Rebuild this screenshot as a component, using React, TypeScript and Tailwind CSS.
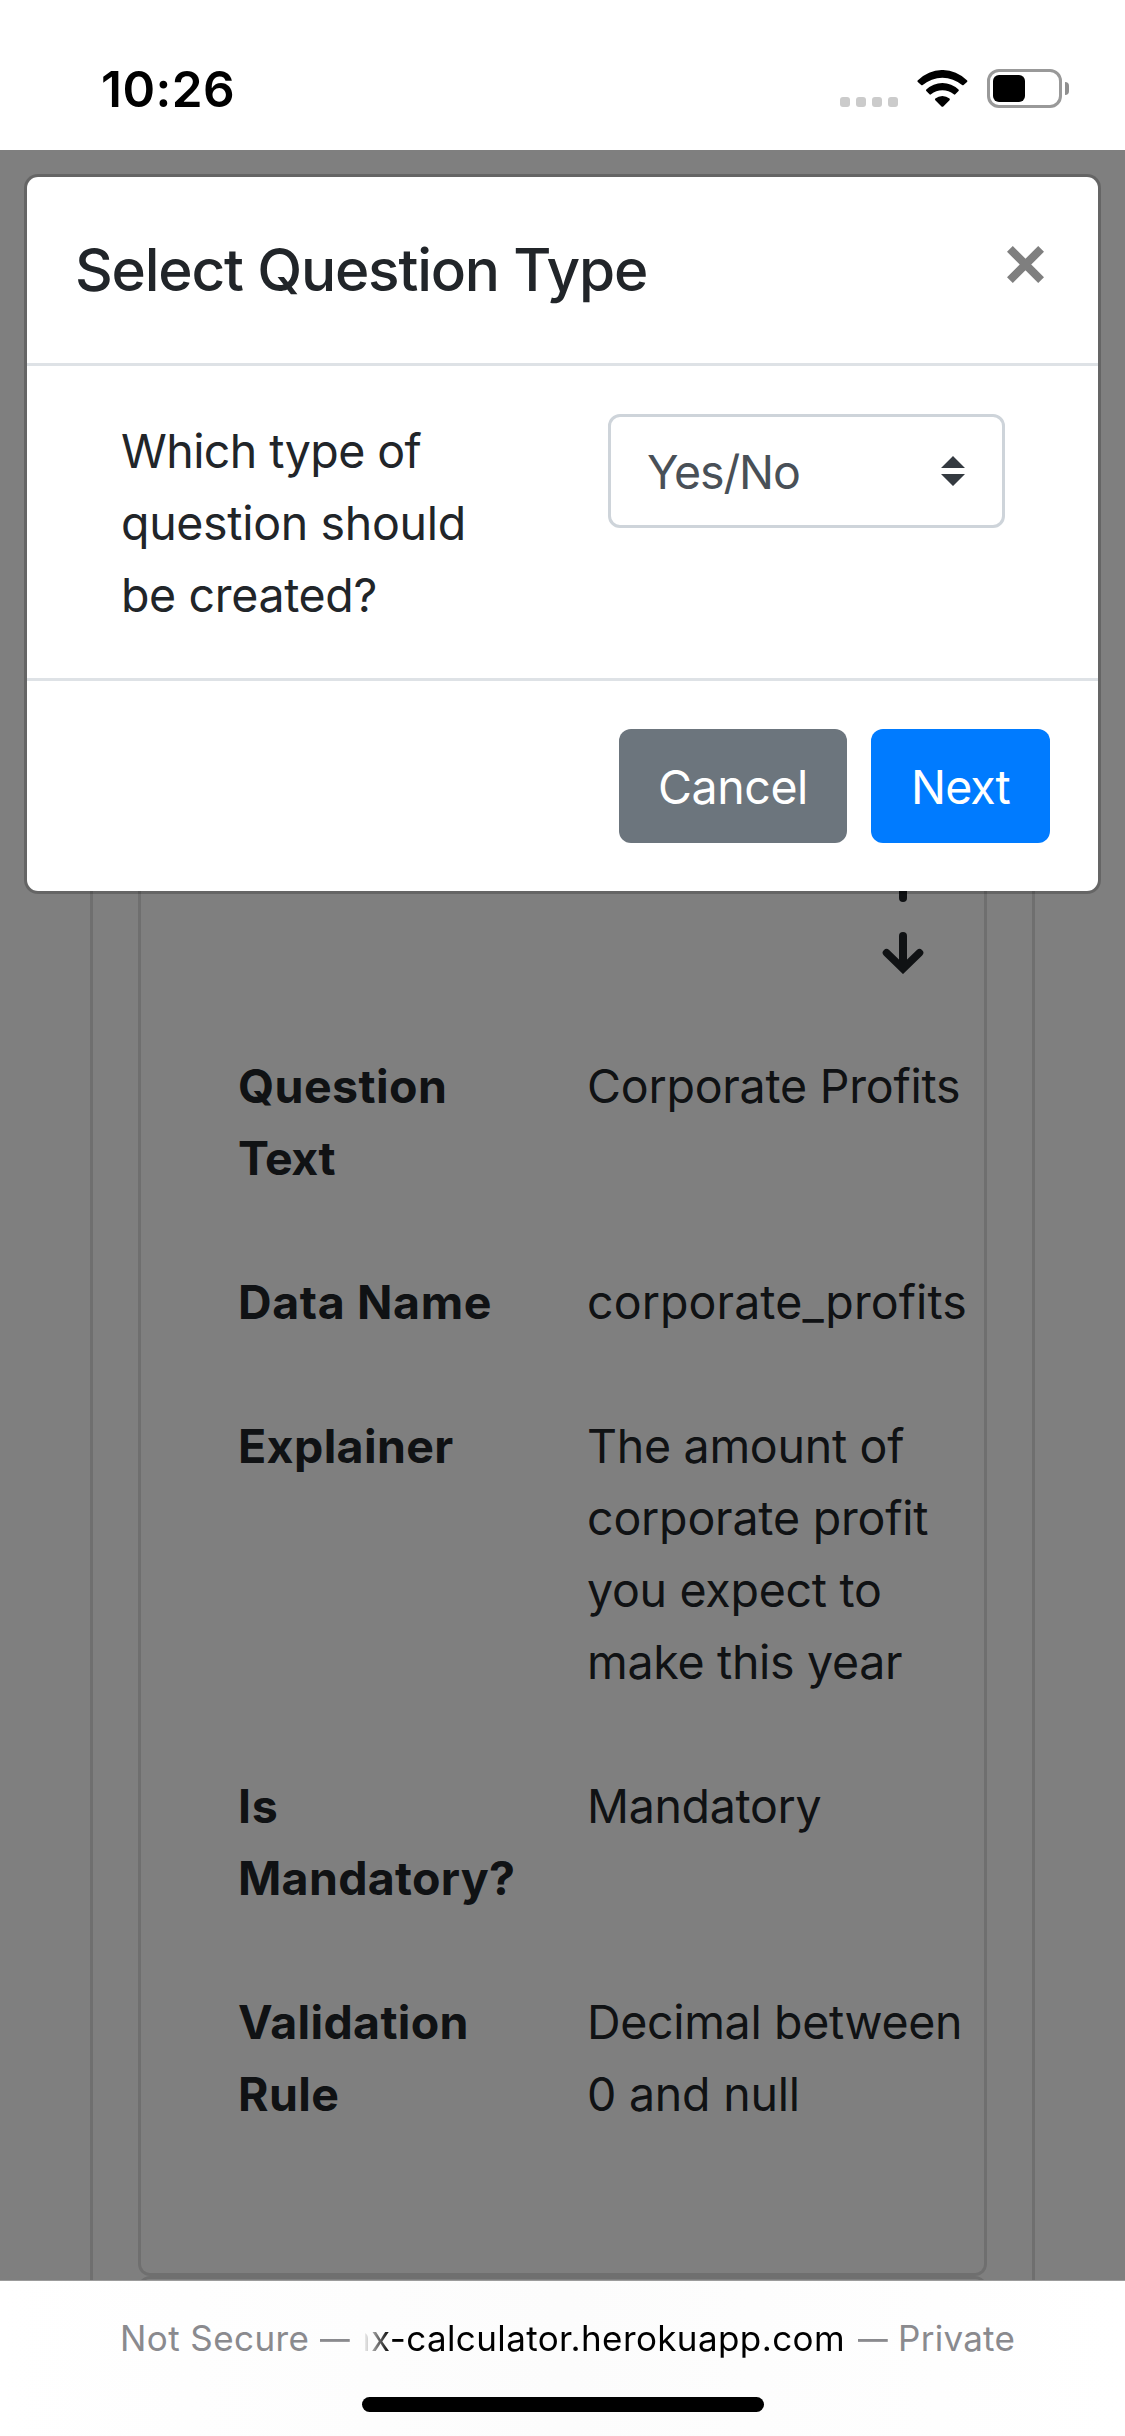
import React from "react";

type Line = { text: string; track: string };

const rows: { label: Line[]; value: Line[] }[] = [
  {
    label: [
      { text: "Question", track: "tracking-[0.0095em]" },
      { text: "Text", track: "tracking-[-0.010em]" },
    ],
    value: [{ text: "Corporate Profits", track: "tracking-[-0.0048em]" }],
  },
  {
    label: [{ text: "Data Name", track: "tracking-[0.0135em]" }],
    value: [{ text: "corporate_profits", track: "tracking-[0.0022em]" }],
  },
  {
    label: [{ text: "Explainer", track: "tracking-[0.008em]" }],
    value: [
      { text: "The amount of", track: "tracking-[-0.006em]" },
      { text: "corporate profit", track: "tracking-[-0.004em]" },
      { text: "you expect to", track: "tracking-[-0.006em]" },
      { text: "make this year", track: "tracking-[-0.0066em]" },
    ],
  },
  {
    label: [
      { text: "Is", track: "tracking-[0.015em]" },
      { text: "Mandatory?", track: "tracking-[0.0065em]" },
    ],
    value: [{ text: "Mandatory", track: "tracking-[-0.007em]" }],
  },
  {
    label: [
      { text: "Validation", track: "tracking-[0.007em]" },
      { text: "Rule", track: "tracking-[0.008em]" },
    ],
    value: [
      { text: "Decimal between", track: "tracking-[-0.007em]" },
      { text: "0 and null", track: "tracking-[-0.005em]" },
    ],
  },
];

function Lines({ lines }: { lines: Line[] }) {
  return (
    <>
      {lines.map((l) => (
        <span key={l.text} className={`block whitespace-nowrap ${l.track}`}>
          {l.text}
        </span>
      ))}
    </>
  );
}

function StatusBar() {
  return (
    <header className="flex h-[150px] shrink-0 justify-between bg-white pl-[101px] pr-[56px]">
      <span className="mt-[59px] text-[49.5px] leading-[60px] font-semibold tracking-[0.009em] text-black">
        10:26
      </span>
      <div className="mt-[69px] flex h-[39px]">
        <div className="mt-[28px] flex gap-[6px]">
          {[0, 1, 2, 3].map((i) => (
            <i key={i} className="size-[10px] rounded-[3px] bg-[#cbcbcb]" />
          ))}
        </div>
        <svg className="mt-px ml-[19px] h-[38px] w-[51px]" viewBox="0 0 51 38" fill="#000">
          <path d="M0.9 10.2A34.5 34.5 0 0 1 49.9 10.2Q50.9 11 50 11.9L46.6 15Q45.9 15.6 45.1 15A30.5 30.5 0 0 0 5.7 15Q4.9 15.6 4.2 15L0.8 11.9Q-0.1 11 0.9 10.2Z" />
          <path d="M9.3 19.4A23.4 23.4 0 0 1 41.5 19.4Q42.3 20.2 41.5 21L38.3 24.3Q37.6 25 36.8 24.3A18.4 18.4 0 0 0 14 24.3Q13.2 25 12.5 24.3L9.3 21Q8.5 20.2 9.3 19.4Z" />
          <path d="M18.3 28.6A11.2 11.2 0 0 1 32.5 28.6Q33.3 29.4 32.5 30.2L26.3 36.4Q25.4 37.3 24.5 36.4L18.3 30.2Q17.5 29.4 18.3 28.6Z" />
        </svg>
        <div className="ml-[19px] h-[39px] w-[75px] rounded-[12px] border-[3px] border-[#999] p-[3px]">
          <div className="h-[27px] w-[32px] rounded-[6px] bg-black" />
        </div>
        <div className="mt-[13px] ml-[3px] h-[13px] w-[4px] rounded-r-full bg-[#8f8f8f]" />
      </div>
    </header>
  );
}

function MoveIcon({ up = false }: { up?: boolean }) {
  return (
    <svg
      className={up ? "h-[42px] w-[42px] rotate-180" : "h-[42px] w-[42px]"}
      viewBox="0 0 42 42"
      fill="none"
      stroke="#212529"
      strokeWidth="8"
      strokeLinecap="round"
    >
      <path d="M21 4V34" />
      <path d="M4.5 20.8L21 36.8L37.5 20.8" strokeWidth="7.6" />
    </svg>
  );
}

function Page() {
  return (
    <div className="mx-[90px] mt-[60px] border-x-[3px] border-black/[.125] px-[45px] text-[46.5px] leading-[72px] text-[#212529]">
      <section className="h-[2066px] rounded-b-[12px] border-[3px] border-t-0 border-black/[.125] pt-[650px]">
        <div className="ml-[741px] flex flex-col gap-[30px]">
          <MoveIcon up />
          <MoveIcon />
        </div>
        <dl className="mt-[76px] flex flex-col gap-[72px] pl-[97px]">
          {rows.map((r) => (
            <div key={r.label[0].text} className="flex">
              <dt className="w-[349px] shrink-0 font-bold">
                <Lines lines={r.label} />
              </dt>
              <dd>
                <Lines lines={r.value} />
              </dd>
            </div>
          ))}
        </dl>
      </section>
      <section className="h-[200px] rounded-t-[12px] border-[3px] border-black/[.125]" />
    </div>
  );
}

function Modal() {
  return (
    <div
      role="dialog"
      className="absolute top-[24px] left-[24px] flex h-[720px] w-[1077px] flex-col rounded-[14px] border-[3px] border-black/20 bg-white bg-clip-padding text-[46.5px] leading-[72px] text-[#212529]"
    >
      <div className="flex h-[189px] justify-between border-b-[3px] border-[#dee2e6] pt-[48px] pr-[54px] pl-[48px]">
        <h5 className="text-[58.5px] leading-[90px] font-medium tracking-[-0.0204em]">
          Select Question Type
        </h5>
        <svg
          className="mt-[21px] size-[37px]"
          viewBox="0 0 37 37"
          stroke="#7f7f7f"
          strokeWidth="8.2"
        >
          <path d="M2.9 2.9L34.1 34.1M34.1 2.9L2.9 34.1" />
        </svg>
      </div>
      <div className="flex h-[312px] justify-between pt-[48px] pr-[93px] pl-[94px]">
        <p className="mt-px">
          <Lines
            lines={[
              { text: "Which type of", track: "tracking-[-0.0125em]" },
              { text: "question should", track: "tracking-[-0.007em]" },
              { text: "be created?", track: "tracking-[-0.0075em]" },
            ]}
          />
        </p>
        <div className="flex h-[114px] w-[397px] items-center justify-between rounded-[12px] border-[3px] border-[#ced4da] pr-[37px] pl-[36px] tracking-[-0.0234em] text-[#495057]">
          <span className="pt-px">Yes/No</span>
          <svg className="mb-[1px] h-[30px] w-[24px]" viewBox="0 0 24 30" fill="#343a40">
            <path d="M0 12L12 0L24 12ZM0 18H24L12 30Z" />
          </svg>
        </div>
      </div>
      <div className="flex flex-1 justify-end gap-[24px] border-t-[3px] border-[#dee2e6] pt-[48px] pr-[48px] text-white">
        <button className="h-[114px] w-[228px] rounded-[12px] bg-[#6c757d] pt-px tracking-[-0.0096em]">
          Cancel
        </button>
        <button className="h-[114px] w-[179px] rounded-[12px] bg-[#007bff] pt-px tracking-[-0.0207em]">
          Next
        </button>
      </div>
    </div>
  );
}

function AddressBar() {
  return (
    <footer className="flex h-[156px] shrink-0 flex-col border-t border-[#9b9b9b] bg-linear-to-r from-white via-[#fcfcfc] to-white text-[35px] leading-[44px] text-[#8a8a8e]">
      <div className="mt-[35px] flex pl-[120px] whitespace-nowrap">
        <span className="w-[200px] tracking-[0.012em]">Not Secure</span>
        <span className="w-[45px] origin-left scale-x-85">—</span>
        <span className="flex w-[480px] justify-end overflow-hidden mask-l-from-[455px] mask-l-to-[482px] text-black">
          <span className="tracking-[0.0114em]">ax-calculator.herokuapp.com</span>
        </span>
        <span className="ml-[13px] w-[40px] origin-left scale-x-85">—</span>
        <span className="tracking-[0.008em]">Private</span>
      </div>
      <div className="mt-[37px] ml-[362px] h-[15px] w-[402px] rounded-full bg-black" />
    </footer>
  );
}

export default function App() {
  return (
    <div className="flex h-[2436px] w-[1125px] flex-col overflow-hidden bg-white font-['Inter',sans-serif]">
      <StatusBar />
      <main className="relative flex h-[2130px] shrink-0 flex-col overflow-hidden">
        <Page />
        <div className="absolute inset-0 bg-black/50" />
        <Modal />
      </main>
      <AddressBar />
    </div>
  );
}
